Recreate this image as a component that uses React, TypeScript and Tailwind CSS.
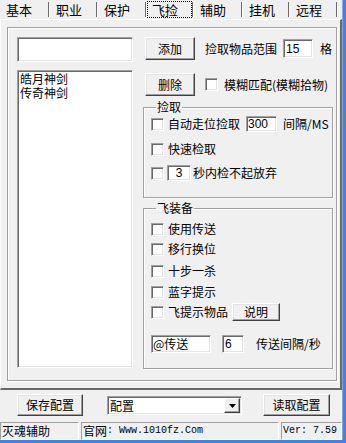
import type { ReactNode } from "react";

const tabs = [
  { label: "基本", w: "w-[50px]" },
  { label: "职业", w: "w-[48px]" },
  { label: "保护", w: "w-[49px]" },
  { label: "飞捡", w: "w-[47px]", active: true },
  { label: "辅助", w: "w-[49px]" },
  { label: "挂机", w: "w-[47px]" },
  { label: "远程", w: "w-[48px]" },
];

function Btn({ children, className = "" }: { children: ReactNode; className?: string }) {
  return (
    <div
      className={`flex items-center justify-center bg-[#f0f0f0] border border-t-white border-l-white border-r-[#404040] border-b-[#404040] shadow-[inset_-1px_-1px_0_#a0a0a0,inset_1px_1px_0_#e3e3e3] text-[12px] leading-none ${className}`}
    >
      {children}
    </div>
  );
}

function Field({ children, className = "" }: { children?: ReactNode; className?: string }) {
  return (
    <div
      className={`flex items-center bg-white border border-t-[#a0a0a0] border-l-[#a0a0a0] border-b-white border-r-white shadow-[inset_1px_1px_0_#696969,inset_-1px_-1px_0_#e3e3e3] text-[12px] leading-none ${className}`}
    >
      {children}
    </div>
  );
}

function Check() {
  return (
    <div className="w-[13px] h-[13px] shrink-0 bg-white border border-t-[#a0a0a0] border-l-[#a0a0a0] border-b-white border-r-white shadow-[inset_1px_1px_0_#696969,inset_-1px_-1px_0_#e3e3e3]" />
  );
}

function Group({ title, className = "", children }: { title: string; className?: string; children: ReactNode }) {
  return (
    <fieldset
      className={`border border-[#a0a0a0] shadow-[inset_1px_1px_0_#fff,1px_1px_0_#fff] pl-[7px] ${className}`}
    >
      <legend className="ml-[5px] px-[1px] text-[12px] leading-[14px]">{title}</legend>
      {children}
    </fieldset>
  );
}

export default function App() {
  return (
    <div className="w-[346px] h-[443px] bg-[#f0f0f0] text-black font-['Noto_Sans_CJK_SC',sans-serif] flex flex-col overflow-hidden">
      <div className="flex h-[440px]">
        <div className="w-[342px] flex flex-col">
          {/* tabs */}
          <div className="flex h-[19px] text-[13px] leading-none">
            {tabs.map((t) => (
              <div key={t.label} className={`${t.w} h-full flex items-center`}>
                {t.active ? (
                  <div className="flex-1 h-[17px] mt-[-1px] flex items-center pl-[5px] outline-1 outline-dotted outline-black -outline-offset-1">
                    {t.label}
                  </div>
                ) : (
                  <div className="flex-1 pl-[6px]">{t.label}</div>
                )}
                <div className="w-[2px] h-[15px] border-l border-l-[#696969] border-r border-r-white" />
              </div>
            ))}
          </div>

          {/* tab panel */}
          <div className="h-[371px] border-t border-l border-t-white border-l-white border-r-2 border-r-[#696969] border-b-2 border-b-[#696969] pl-[6px] pt-[7px]">
            <div className="w-[330px] h-[354px] border border-[#a0a0a0] shadow-[inset_1px_1px_0_#fff,1px_1px_0_#fff] flex pl-[9px] pt-[9px]">
              {/* left column */}
              <div className="w-[116px] flex flex-col">
                <Field className="h-[25px]" />
                <Field className="h-[298px] mt-[8px] !items-start">
                  <div className="pl-[2px] pt-[1px] text-[12px] leading-[14px]">
                    <div>皓月神剑</div>
                    <div>传奇神剑</div>
                  </div>
                </Field>
              </div>

              {/* right column */}
              <div className="w-[190px] ml-[10px] flex flex-col text-[12px] leading-none">
                <div className="flex items-center h-[23px]">
                  <Btn className="ml-[2px] w-[50px] h-[23px]">添加</Btn>
                  <span className="ml-[10px] w-[72px]">捡取物品范围</span>
                  <Field className="ml-[6px] w-[30px] h-[19px] pl-[2px] font-['Liberation_Sans',sans-serif]">15</Field>
                  <span className="ml-[7px]">格</span>
                </div>
                <div className="flex items-center h-[23px] mt-[13px]">
                  <Btn className="ml-[2px] w-[50px] h-[23px]">删除</Btn>
                  <div className="ml-[10px]">
                    <Check />
                  </div>
                  <span className="ml-[6px] whitespace-nowrap">模糊匹配(模糊拾物)</span>
                </div>

                <Group title="捡取" className="mt-[4px] h-[98px]">
                  <div className="flex items-center h-[16px] mt-[2px]">
                    <Check />
                    <span className="ml-[4px] w-[72px]">自动走位捡取</span>
                    <Field className="ml-[6px] w-[31px] h-[16px] pl-[1px] font-['Liberation_Sans',sans-serif]">300</Field>
                    <span className="ml-[6px] whitespace-nowrap">间隔/MS</span>
                  </div>
                  <div className="flex items-center h-[16px] mt-[9px]">
                    <Check />
                    <span className="ml-[4px]">快速检取</span>
                  </div>
                  <div className="flex items-center h-[16px] mt-[8px]">
                    <Check />
                    <Field className="ml-[3px] w-[24px] h-[16px] justify-center font-['Liberation_Sans',sans-serif]">3</Field>
                    <span className="ml-[2px]">秒内检不起放弃</span>
                  </div>
                </Group>

                <Group title="飞装备" className="mt-[3px] h-[168px]">
                  <div className="flex items-center h-[16px] mt-[6px]">
                    <Check />
                    <span className="ml-[4px]">使用传送</span>
                  </div>
                  <div className="flex items-center h-[16px] mt-[4px]">
                    <Check />
                    <span className="ml-[4px]">移行换位</span>
                  </div>
                  <div className="flex items-center h-[16px] mt-[6px]">
                    <Check />
                    <span className="ml-[4px]">十步一杀</span>
                  </div>
                  <div className="flex items-center h-[16px] mt-[5px]">
                    <Check />
                    <span className="ml-[4px]">蓝字提示</span>
                  </div>
                  <div className="flex items-center h-[18px] mt-[3px]">
                    <Check />
                    <span className="ml-[4px] w-[60px]">飞提示物品</span>
                    <Btn className="ml-[4px] w-[48px] h-[18px]">说明</Btn>
                  </div>
                  <div className="flex items-center h-[18px] mt-[14px]">
                    <Field className="w-[60px] h-[18px] pl-[1px]">@传送</Field>
                    <Field className="ml-[11px] w-[22px] h-[18px] pl-[2px] font-['Liberation_Sans',sans-serif]">6</Field>
                    <span className="ml-[12px]">传送间隔/秒</span>
                  </div>
                </Group>
              </div>
            </div>
          </div>

          {/* bottom buttons */}
          <div className="h-[32px] flex items-start pt-[4px] text-[12px] leading-none">
            <Btn className="ml-[17px] w-[66px] h-[22px]">保存配置</Btn>
            <Field className="ml-[24px] mt-[2px] w-[135px] h-[19px] pl-[2px] !justify-between">
              <span>配置</span>
              <div className="w-[16px] h-[15px] mr-[1px] flex items-center justify-center bg-[#f0f0f0] border border-t-white border-l-white border-r-[#404040] border-b-[#404040] shadow-[inset_-1px_-1px_0_#a0a0a0]">
                <svg width="7" height="4" viewBox="0 0 7 4">
                  <path d="M0 0h7L3.5 4z" fill="#000" />
                </svg>
              </div>
            </Field>
            <Btn className="ml-[21px] w-[67px] h-[22px]">读取配置</Btn>
          </div>

          {/* status bar */}
          <div className="h-[18px] flex text-[12px] leading-none">
            <div className="w-[79px] h-full flex items-center pl-[1px] border border-t-[#a0a0a0] border-l-[#a0a0a0] border-b-white border-r-white">
              灭魂辅助
            </div>
            <div className="ml-[2px] w-[198px] h-full flex items-center pl-[1px] border border-t-[#a0a0a0] border-l-[#a0a0a0] border-b-white border-r-white">
              官网
              <span className="font-['Liberation_Mono',monospace] text-[10px] whitespace-pre">: Www.1010fz.Com</span>
            </div>
            <div className="ml-[2px] w-[61px] h-full flex items-center pl-[1px] border border-t-[#a0a0a0] border-l-[#a0a0a0] border-b-white border-r-white font-['Liberation_Mono',monospace] text-[10px] whitespace-pre">
              Ver: 7.59
            </div>
          </div>
        </div>
        <div className="w-[4px] h-full border-l border-l-[#8aa8cc] bg-[#3a86e0]" />
      </div>
      <div className="h-[3px] bg-[#3a86e0]" />
    </div>
  );
}
